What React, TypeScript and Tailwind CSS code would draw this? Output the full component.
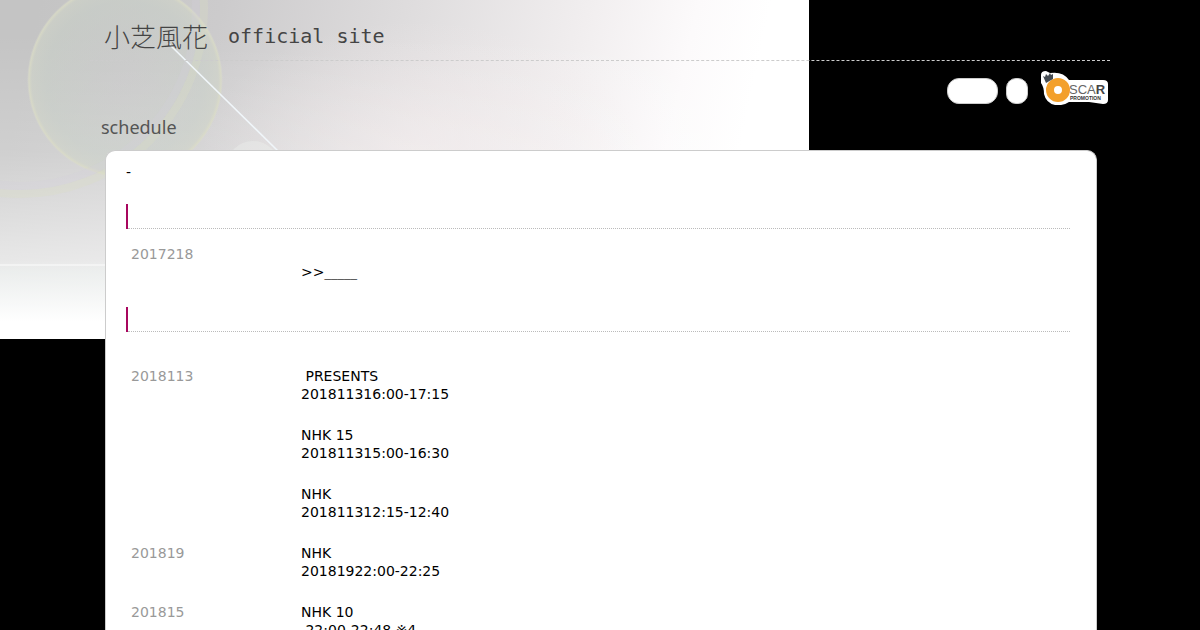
import clsx from "clsx"

type Program = {
    title: string;
    time: string;
    link?: string;
}

type Day = {
    date: string;
    programs: Program[];
}

const news: Day[] = [
    { date: "2017218", programs: [{ title: "\u00a0", time: ">>", link: "_____" }] },
]

const schedule: Day[] = [
    {
        date: "2018113",
        programs: [
            { title: "\u00a0PRESENTS", time: "201811316:00-17:15" },
            { title: "NHK 15", time: "201811315:00-16:30" },
            { title: "NHK", time: "201811312:15-12:40" },
        ],
    },
    { date: "201819", programs: [{ title: "NHK", time: "20181922:00-22:25" }] },
    { date: "201815", programs: [{ title: "NHK 10", time: "\u00a022:00-22:48 ※4" }] },
]

function Backdrop() {
    return (
        <svg className="absolute top-0 left-0" width="809" height="339" viewBox="0 0 809 339" aria-hidden="true">
            <defs>
                <linearGradient id="sky" gradientUnits="userSpaceOnUse" x1="40" y1="0" x2="740" y2="150">
                    <stop offset="0" stopColor="#c4c4c4" />
                    <stop offset="0.25" stopColor="#cccbcc" />
                    <stop offset="0.5" stopColor="#dedcdd" />
                    <stop offset="0.75" stopColor="#f1eeef" />
                    <stop offset="0.9" stopColor="#fcfafb" />
                    <stop offset="1" stopColor="#ffffff" />
                </linearGradient>
                <linearGradient id="ground" x1="0" y1="0" x2="0" y2="1">
                    <stop offset="0.1" stopColor="#fff" stopOpacity="0" />
                    <stop offset="0.45" stopColor="#fff" stopOpacity="0.2" />
                    <stop offset="0.77" stopColor="#fff" stopOpacity="0.6" />
                    <stop offset="0.8" stopColor="#f8fbfa" stopOpacity="0.75" />
                    <stop offset="0.95" stopColor="#fff" stopOpacity="1" />
                </linearGradient>
                <radialGradient id="lens">
                    <stop offset="0" stopColor="#cccdcc" stopOpacity="0.3" />
                    <stop offset="0.8" stopColor="#c9d1c8" stopOpacity="0.5" />
                    <stop offset="0.95" stopColor="#cfd4c8" stopOpacity="0.6" />
                    <stop offset="0.98" stopColor="#dadcc6" stopOpacity="0.8" />
                    <stop offset="1" stopColor="#dadcce" stopOpacity="0" />
                </radialGradient>
                <radialGradient id="glow">
                    <stop offset="0" stopColor="#f4ebec" stopOpacity="0.6" />
                    <stop offset="0.5" stopColor="#f4ebec" stopOpacity="0.3" />
                    <stop offset="1" stopColor="#f4ebec" stopOpacity="0" />
                </radialGradient>
            </defs>
            <rect width="809" height="339" fill="url(#sky)" />
            <ellipse cx="420" cy="150" rx="220" ry="130" fill="url(#glow)" />
            <rect width="809" height="339" fill="url(#ground)" />
            <circle cx="125" cy="80" r="98" fill="url(#lens)" />
            <circle cx="20" cy="10" r="184" fill="none" stroke="#dcdfc4" strokeOpacity="0.3" strokeWidth="8" />
            <circle cx="20" cy="10" r="176" fill="none" stroke="#d4cfdc" strokeOpacity="0.25" strokeWidth="8" />
            <circle cx="253" cy="168" r="27" fill="#eef0ee" fillOpacity="0.4" />
            <path d="M168 43 L278 151" stroke="#f0f6fa" strokeWidth="1.6" />
            <path d="M0 265 H110" stroke="#fff" strokeOpacity="0.6" strokeWidth="1.5" />
        </svg>
    )
}

function OscarLogo() {
    return (
        <svg width="67" height="34" viewBox="0 0 67 34" role="img" aria-label="Oscar Promotion">
            <path
                d="M0 4 Q0 0 5 0 L9 2 Q22 0 28 9 L62 9 Q67 9 67 13 L67 29 Q67 33 62 33 L48 31 L28 31 Q22 35 14 34 Q5 32 3 23 Q3 16 0 12 Z"
                fill="#fff"
            />
            <circle cx="17" cy="19" r="8" fill="none" stroke="#f3a02b" strokeWidth="8" />
            <path d="M2 5 L4 6 L5 3 L7 5 L9 2 L10 4 L12 3 L12 8 L5 12 Z" fill="#444b52" />
            <text x="28" y="23" fontSize="13" fill="#666" className="font-['Liberation_Sans',sans-serif]">
                SCA<tspan fontWeight="700" fill="#444">R</tspan>
            </text>
            <text x="29" y="29" fontSize="5" fontWeight="700" fill="#333" className="font-['Liberation_Sans',sans-serif]">
                PROMOTION
            </text>
        </svg>
    )
}

function SectionBar({ className }: { className?: string }) {
    return (
        <div className={clsx("flex h-[25px]", className)}>
            <div className="w-0.5 bg-[#a8065e]" />
            <h3 className="flex-1 border-b border-dotted border-[#bbb]" />
        </div>
    )
}

function DayTable({ days, className }: { days: Day[]; className?: string }) {
    return (
        <table className={clsx("w-full table-fixed text-left", className)}>
            <tbody>
                {days.map((day) => (
                    <tr key={day.date} className="align-top">
                        <th scope="row" className="w-[175px] pl-[5px] font-normal text-[#999]">{day.date}</th>
                        <td>
                            {day.programs.map((program) => (
                                <div key={program.time} className="pb-[23px]">
                                    <p>{program.title}</p>
                                    <p>
                                        {program.time}
                                        {program.link && <a href="#news" className="text-[13px] leading-none text-[#555]">{program.link}</a>}
                                    </p>
                                </div>
                            ))}
                        </td>
                    </tr>
                ))}
            </tbody>
        </table>
    )
}

export default function App() {
    return (
        <div className="relative min-h-screen bg-black font-['DejaVu_Sans',sans-serif] text-sm leading-[18px] text-black">
            <Backdrop />

            <div className="relative mx-auto max-w-[1020px]">
                <header>
                    <h1 className="flex h-[61px] items-center gap-5 border-b border-dashed border-[#ccc] pt-3 pl-3.5 whitespace-nowrap text-[#444]">
                        <span className="text-[26px] leading-8 font-['Noto_Sans_CJK_JP',sans-serif] font-light">小芝風花</span>
                        <span className="text-xl leading-8 font-['DejaVu_Sans_Mono',monospace]">official site</span>
                    </h1>
                    <nav className="flex items-center justify-end gap-2 pt-2.5 pr-0.5">
                        <button type="button" aria-label="Profile" className="mt-1.5 h-[26px] w-[51px] rounded-xl border border-[#ccc] bg-white" />
                        <button type="button" aria-label="Blog" className="mt-1.5 h-[26px] w-[22px] rounded-[10px] border border-[#ccc] bg-white" />
                        <a href="#oscar" className="ml-[5px]">
                            <OscarLogo />
                        </a>
                    </nav>
                </header>

                <h2 className="mt-2.5 pl-[11px] text-lg leading-6 text-[#555] font-['Noto_Sans',sans-serif]">schedule</h2>

                <main className="mt-[11px] mr-[13px] ml-[15px] rounded-t-[10px] border border-b-0 border-[#ccc] bg-white pt-3 pr-[26px] pl-5">
                    <p>-</p>
                    <SectionBar className="mt-[23px]" />
                    <DayTable days={news} className="mt-4" />
                    <SectionBar className="mt-[3px]" />
                    <DayTable days={schedule} className="mt-[35px]" />
                </main>
            </div>
        </div>
    )
}
